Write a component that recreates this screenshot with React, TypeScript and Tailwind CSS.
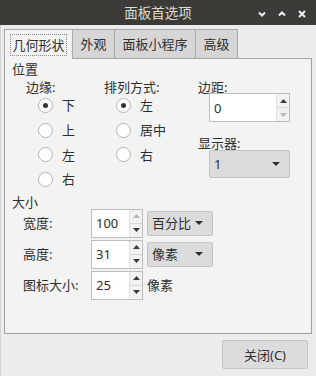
const font = "font-['Noto_Sans','Noto_Sans_CJK_SC',sans-serif]";

function Radio({ label, checked }: { label: string; checked?: boolean }) {
  return (
    <div className="flex h-[24.7px] items-center gap-[9px]">
      <span className="flex h-[15px] w-[15px] items-center justify-center rounded-full border border-[#b4b4b4] bg-white">
        {checked && <span className="block h-[5px] w-[5px] rounded-full bg-[#333]" />}
      </span>
      <span>{label}</span>
    </div>
  );
}

function Arrow({ up, dim }: { up?: boolean; dim?: boolean }) {
  return (
    <svg width="7" height="4" viewBox="0 0 7 4" aria-hidden="true">
      <path d={up ? "M0,4 L3.5,0 L7,4 Z" : "M0,0 L3.5,4 L7,0 Z"} fill={dim ? "#b8b8b8" : "#3a3a3a"} />
    </svg>
  );
}

function SpinBox({
  value,
  w,
  upDim,
  downDim,
}: {
  value: string;
  w: string;
  upDim?: boolean;
  downDim?: boolean;
}) {
  return (
    <div className={`flex h-[29px] ${w} border border-[#bdbdbd] bg-white`}>
      <div className="flex flex-1 items-center pl-[4px]">{value}</div>
      <div className="flex w-[13px] flex-col border-l border-[#e2e2e2] bg-[#f2f2f2]">
        <div className="flex flex-1 items-center justify-center border-b border-[#d8d8d8]">
          <Arrow up dim={upDim} />
        </div>
        <div className="flex flex-1 items-center justify-center">
          <Arrow dim={downDim} />
        </div>
      </div>
    </div>
  );
}

function Combo({ value, w, h }: { value: string; w: string; h: string }) {
  return (
    <div
      className={`flex ${w} ${h} items-center justify-between rounded-[2px] border border-[#c4c4c4] bg-[#dcdcdc] pl-[4px] pr-[9px]`}
    >
      <span>{value}</span>
      <svg width="8" height="4" viewBox="0 0 8 4" aria-hidden="true">
        <path d="M0,0 L4,4 L8,0 Z" fill="#2e2e2e" />
      </svg>
    </div>
  );
}

export default function App() {
  return (
    <div
      className={`flex h-[376px] w-[316px] flex-col overflow-hidden bg-[#ececec] text-[13px] leading-[18px] text-[#2f2f2f] ${font}`}
    >
      {/* Title bar */}
      <div className="relative flex h-[25px] shrink-0 items-center justify-center bg-[#3c3b37] text-[#dfdbd2]">
        <span className="text-[13.5px]">面板首选项</span>
        <div className="absolute right-[10px] top-[10px] flex gap-[12px]">
          <svg width="8" height="8" viewBox="0 0 8 8" aria-hidden="true">
            <path d="M1,2.5 L4,5.5 L7,2.5" fill="none" stroke="#f0f0f0" strokeWidth="2" />
          </svg>
          <svg width="8" height="8" viewBox="0 0 8 8" aria-hidden="true">
            <path d="M1,5.5 L4,2.5 L7,5.5" fill="none" stroke="#f0f0f0" strokeWidth="2" />
          </svg>
          <svg width="8" height="8" viewBox="0 0 8 8" aria-hidden="true">
            <path d="M1,1 L7,7 M7,1 L1,7" fill="none" stroke="#f0f0f0" strokeWidth="2" />
          </svg>
        </div>
      </div>

      {/* Body */}
      <div className="flex flex-1 flex-col border-l border-[#d2d2d2] pl-[3px] pr-[4px] pt-[4px]">
        {/* Tabs */}
        <div className="flex h-[30px]">
          <div className="flex w-[69px] items-center justify-center border-l border-r border-t border-[#a8a8a8] bg-[#f3f3f3]">
            <span className="border border-dotted border-[#8a8a8a] px-[1px] leading-[20px]">几何形状</span>
          </div>
          <div className="flex w-[42px] items-center justify-center border-b border-r border-t border-[#a8a8a8] bg-[#d6d6d6]">
            外观
          </div>
          <div className="flex w-[81px] items-center justify-center border-b border-r border-t border-[#a8a8a8] bg-[#d6d6d6]">
            面板小程序
          </div>
          <div className="flex w-[42px] items-center justify-center border-b border-r border-t border-[#a8a8a8] bg-[#d6d6d6]">
            高级
          </div>
          <div className="flex-1 border-b border-[#a8a8a8]" />
        </div>

        {/* Panel */}
        <div className="flex h-[275px] flex-col border-b border-l border-r border-[#a0a0a0] bg-[#f3f3f3] px-[7px] pt-[1px]">
          <div>位置</div>
          <div className="ml-[14px] flex">
            <div className="flex w-[78px] flex-col">
              <div className="h-[15px]">边缘:</div>
              <div className="pl-[12px]">
                <Radio label="下" checked />
                <Radio label="上" />
                <Radio label="左" />
                <Radio label="右" />
              </div>
            </div>
            <div className="flex w-[94px] flex-col">
              <div className="h-[15px]">排列方式:</div>
              <div className="pl-[12px]">
                <Radio label="左" checked />
                <Radio label="居中" />
                <Radio label="右" />
              </div>
            </div>
            <div className="flex flex-col">
              <div className="h-[15px]">边距:</div>
              <div className="pl-[11px]">
                <SpinBox value="0" w="w-[81px]" downDim />
              </div>
              <div className="mt-[12px] h-[16px]">显示器:</div>
              <div className="pl-[11px]">
                <Combo value="1" w="w-[81px]" h="h-[28px]" />
              </div>
            </div>
          </div>

          <div className="mt-[1px] h-[16px]">大小</div>
          <div className="flex flex-col gap-[2px] pl-[11px]">
            <div className="flex items-center">
              <span className="w-[68px]">宽度:</span>
              <SpinBox value="100" w="w-[52px]" upDim />
              <div className="ml-[4px]">
                <Combo value="百分比" w="w-[66px]" h="h-[25px]" />
              </div>
            </div>
            <div className="flex items-center">
              <span className="w-[68px]">高度:</span>
              <SpinBox value="31" w="w-[52px]" />
              <div className="ml-[4px]">
                <Combo value="像素" w="w-[66px]" h="h-[25px]" />
              </div>
            </div>
            <div className="flex items-center">
              <span className="w-[68px]">图标大小:</span>
              <SpinBox value="25" w="w-[52px]" />
              <span className="ml-[4px]">像素</span>
            </div>
          </div>
        </div>

        {/* Buttons */}
        <div className="mr-[4px] mt-[6px] flex justify-end">
          <button className="flex h-[29px] w-[86px] items-center justify-center rounded-[2px] border border-[#c6c6c6] bg-[#dcdcdc]">
            关闭(C)
          </button>
        </div>
      </div>
    </div>
  );
}
